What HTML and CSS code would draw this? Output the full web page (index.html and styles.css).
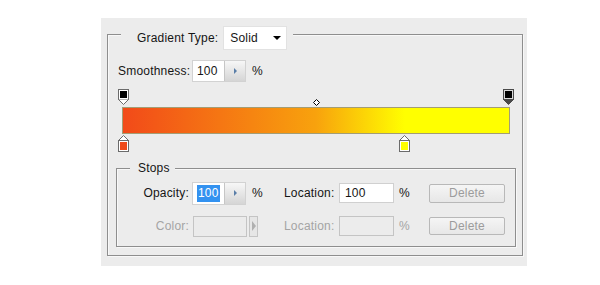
FILE: index.html
```html
<!DOCTYPE html>
<html lang="en">

<head>
    <meta charset="UTF-8">
    <title>Gradient Editor</title>
    <link rel="stylesheet" href="styles.css">
</head>

<body>
    <div class="panel">
        <div class="group outer">
            <div class="legend type-legend">
                <span>Gradient Type:</span>
                <div class="select"><span>Solid</span><i class="caret"></i></div>
            </div>

            <div class="smooth-row">
                <span class="smooth-label">Smoothness:</span>
                <div class="spin"><span class="val">100</span><span class="spin-btn"><i></i></span></div>
                <span class="pct">%</span>
            </div>

            <div class="ramp">
                <div class="bar"></div>
                <div class="track">
                    <!-- opacity stops -->
                    <svg class="stop top" style="left: 0%" width="11" height="17" viewBox="0 0 11 17">
                        <rect x="0.5" y="0.5" width="10" height="10" fill="#fff" stroke="#6b6b6b" />
                        <rect x="2" y="2" width="7" height="7" fill="#000" />
                        <path d="M0.5 10.5 L5.5 15.5 L10.5 10.5" fill="#fff" stroke="#6b6b6b" />
                    </svg>
                    <svg class="stop top" style="left: 100%" width="11" height="17" viewBox="0 0 11 17">
                        <rect x="0.5" y="0.5" width="10" height="10" fill="#d8d8d8" stroke="#4a4a4a" />
                        <rect x="2" y="2" width="7" height="7" fill="#000" />
                        <path d="M0.5 10.5 L5.5 15.5 L10.5 10.5 Z" fill="#4a4a4a" stroke="#4a4a4a" />
                    </svg>
                    <!-- midpoint -->
                    <svg class="mid" style="left: 50%" width="7" height="7" viewBox="0 0 7 7">
                        <path d="M3.5 0.5 L6.5 3.5 L3.5 6.5 L0.5 3.5 Z" fill="#fff" stroke="#000" />
                    </svg>
                    <!-- color stops -->
                    <svg class="stop bottom" style="left: 0%" width="11" height="17" viewBox="0 0 11 17">
                        <path d="M0.5 5.5 L5.5 0.5 L10.5 5.5" fill="#fff" stroke="#6b6b6b" />
                        <rect x="0.5" y="5.5" width="10" height="11" fill="#fff" stroke="#6b6b6b" />
                        <rect x="2" y="7" width="7" height="8" fill="#ef4a1a" />
                    </svg>
                    <svg class="stop bottom" style="left: 73%" width="11" height="17" viewBox="0 0 11 17">
                        <path d="M0.5 5.5 L5.5 0.5 L10.5 5.5" fill="#fff" stroke="#6b6b6b" />
                        <rect x="0.5" y="5.5" width="10" height="11" fill="#fff" stroke="#6b6b6b" />
                        <rect x="2" y="7" width="7" height="8" fill="#ffff00" />
                    </svg>
                </div>
            </div>

            <div class="group stops">
                <div class="legend stops-legend">Stops</div>
                <div class="stop-grid">
                    <span class="lbl">Opacity:</span>
                    <div class="cell">
                        <div class="spin tall"><span class="val"><b class="sel">100</b></span><span class="spin-btn"><i></i></span></div>
                        <span class="pct">%</span>
                    </div>
                    <span class="lbl-left">Location:</span>
                    <div class="cell"><div class="field">100</div></div>
                    <span class="pct-cell">%</span>
                    <div class="btn">Delete</div>

                    <span class="lbl off">Color:</span>
                    <div class="cell">
                        <div class="swatch"></div>
                        <div class="swatch-btn"><i></i></div>
                    </div>
                    <span class="lbl-left off">Location:</span>
                    <div class="cell"><div class="field off-field"></div></div>
                    <span class="pct-cell off">%</span>
                    <div class="btn short">Delete</div>
                </div>
            </div>
        </div>
    </div>
</body>

</html>
```

FILE: styles.css
```css
* {
    margin: 0;
    padding: 0;
}

body {
    background: #fff;
}

.panel {
    width: 426px;
    height: 248px;
    margin: 18px 0 0 101px;
    padding: 16px 0 0 6px;
    box-sizing: border-box;
    background: #ececec;
    font: 12px "Liberation Sans", Arial, sans-serif;
    letter-spacing: 0.2px;
    color: #151515;
}

.group {
    box-sizing: border-box;
    border: 1px solid #8e8e8e;
    box-shadow: inset 1px 1px 0 #f8f8f8, 1px 1px 0 #f8f8f8;
}

.outer {
    width: 416px;
    height: 222px;
}

.legend {
    display: flex;
    align-items: center;
    width: fit-content;
    background: #ececec;
}

.type-legend {
    height: 24px;
    margin: -9px 0 0 13px;
    padding: 0 6px 0 16px;
    gap: 5px;
}

.select {
    width: 64px;
    height: 24px;
    box-sizing: border-box;
    padding: 0 5px 0 6px;
    display: flex;
    align-items: center;
    justify-content: space-between;
    background: #fff;
    border: 1px solid #e2e2e2;
}

.caret {
    width: 0;
    height: 0;
    border-left: 4px solid transparent;
    border-right: 4px solid transparent;
    border-top: 4px solid #000;
}

/* smoothness */
.smooth-row {
    display: flex;
    align-items: center;
    height: 22px;
    margin: 10px 0 0 10px;
}

.smooth-label {
    width: 74px;
}

.spin {
    display: flex;
    width: 54px;
    height: 22px;
    box-sizing: border-box;
    border: 1px solid #d2d2d2;
    background: #fff;
}

.spin.tall {
    height: 23px;
    margin-left: 3px;
}

.spin .val {
    width: 31px;
    padding-left: 4px;
    box-sizing: border-box;
    display: flex;
    align-items: center;
}

.spin-btn {
    flex: 1;
    display: flex;
    align-items: center;
    justify-content: center;
    border-left: 1px solid #c6c6c6;
    background: linear-gradient(#f7f7f7, #d5d5d5);
}

.spin-btn i {
    width: 0;
    height: 0;
    border-left: 3px solid #5a7ea8;
    border-top: 3px solid transparent;
    border-bottom: 3px solid transparent;
}

.pct {
    margin-left: 6px;
}

.sel {
    font-weight: normal;
    background: #3392f0;
    color: #fff;
    line-height: 17px;
    padding: 0 1px;
}

/* gradient ramp */
.ramp {
    position: relative;
    width: 388px;
    height: 64px;
    margin: 7px 0 0 14px;
    padding-top: 18px;
    box-sizing: border-box;
}

.bar {
    height: 27px;
    box-sizing: border-box;
    border: 1px solid #a39d74;
    background: linear-gradient(to right, #f24a19 0%, #f8a20d 50%, #ffff00 73%, #ffff00 100%);
}

.track {
    position: absolute;
    top: 0;
    bottom: 0;
    left: 1px;
    right: 2px;
}

.stop {
    position: absolute;
    display: block;
    margin-left: -5px;
}

.stop.top {
    top: 0;
}

.stop.bottom {
    top: 46px;
}

.mid {
    position: absolute;
    display: block;
    top: 10px;
    margin-left: -3px;
}

/* stops group */
.stops {
    width: 400px;
    height: 79px;
    margin: 15px 0 0 8px;
}

.stops-legend {
    height: 16px;
    margin: -9px 0 0 13px;
    padding: 0 5px 0 8px;
}

.stop-grid {
    display: grid;
    grid-template-columns: 72px 95px 54px 61px 30px 76px;
    grid-auto-rows: 24px;
    row-gap: 9px;
    align-items: center;
    margin-top: 5px;
}

.lbl {
    text-align: right;
}

.cell {
    display: flex;
    align-items: center;
}

.off {
    color: #a4a4a4;
}

.field {
    width: 55px;
    height: 20px;
    margin-left: 1px;
    box-sizing: border-box;
    padding-left: 5px;
    line-height: 18px;
    border: 1px solid #d0d0d0;
    background: #fff;
}

.off-field {
    background: #ececec;
    border-color: #c4c4c4;
}

.swatch {
    width: 54px;
    height: 21px;
    margin-left: 4px;
    box-sizing: border-box;
    border: 1px solid #c4c4c4;
    background: #ebebeb;
}

.swatch-btn {
    width: 9px;
    height: 21px;
    margin-left: 2px;
    box-sizing: border-box;
    border: 1px solid #c4c4c4;
    background: #e6e6e6;
    display: flex;
    align-items: center;
    justify-content: center;
}

.swatch-btn i {
    width: 0;
    height: 0;
    border-left: 4px solid #b0b0b0;
    border-top: 5px solid transparent;
    border-bottom: 5px solid transparent;
}

.btn {
    width: 76px;
    height: 19px;
    box-sizing: border-box;
    border: 1px solid #b8b8b8;
    border-radius: 2px;
    background: linear-gradient(#f5f5f5, #e7e7e7);
    color: #9c9c9c;
    text-align: center;
    line-height: 17px;
}

.btn.short {
    height: 18px;
    line-height: 16px;
}
```
